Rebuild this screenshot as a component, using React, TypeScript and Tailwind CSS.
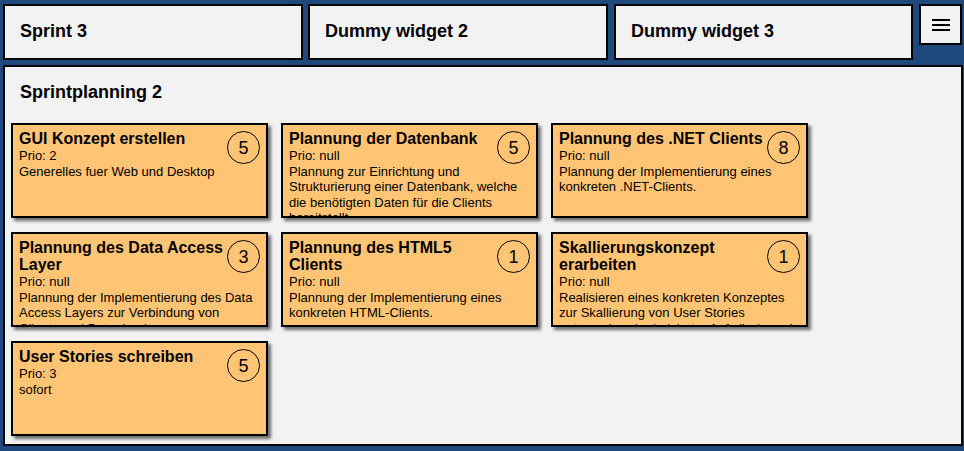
const stories = [
  { title: "GUI Konzept erstellen", prio: "2", points: 5, text: "Generelles fuer Web und Desktop" },
  { title: "Plannung der Datenbank", prio: "null", points: 5, text: "Plannung zur Einrichtung und Strukturierung einer Datenbank, welche die benötigten Daten für die Clients bereitstellt." },
  { title: "Plannung des .NET Clients", prio: "null", points: 8, text: "Plannung der Implementierung eines konkreten .NET-Clients." },
  { title: "Plannung des Data Access Layer", prio: "null", points: 3, text: "Plannung der Implementierung des Data Access Layers zur Verbindung von Clients und Datenbank." },
  { title: "Plannung des HTML5 Clients", prio: "null", points: 1, text: "Plannung der Implementierung eines konkreten HTML-Clients." },
  { title: "Skallierungskonzept erarbeiten", prio: "null", points: 1, text: "Realisieren eines konkreten Konzeptes zur Skallierung von User Stories entsprechend priorisierter Aufwände und Laufzeiten." },
  { title: "User Stories schreiben", prio: "3", points: 5, text: "sofort" },
]

const Widget = ({ title, className = "w-[300px]" }: { title: string; className?: string }) => (
  <div className={`${className} h-[56px] bg-[#f2f2f2] border-2 border-black pl-[15px] pt-[15px] text-[18px] font-bold leading-[21px]`}>
    {title}
  </div>
)

const StoryCard = ({ title, prio, points, text }: { title: string; prio: string; points: number; text: string }) => (
  <div className="w-[257px] h-[95px] bg-[#ffc574] border-2 border-black px-[6px] pt-[5px] overflow-hidden shadow-[3px_3px_3px_rgba(0,0,0,0.55)]">
    <div className="float-right mt-[1px] -mb-[8px] w-[33px] h-[33px] rounded-full border border-black flex items-center justify-center text-[18px] leading-none">
      {points}
    </div>
    <div className="text-[16px] font-bold leading-[17px]">{title}</div>
    <div className="text-[13px] leading-[15.5px] mt-[1px]">Prio: {prio}</div>
    <div className="text-[13px] leading-[15.5px]">{text}</div>
  </div>
)

export default function App() {
  return (
    <div
      className="h-screen w-screen bg-[#1f497d] flex flex-col pl-[3px] pr-[1px] pt-[4px] pb-[5px] gap-[5px] overflow-hidden"
      style={{ fontFamily: '"Liberation Sans", Arial, sans-serif' }}
    >
      <div className="flex gap-[5px] items-start">
        <Widget title="Sprint 3" />
        <Widget title="Dummy widget 2" />
        <Widget title="Dummy widget 3" className="w-[299px] ml-[1px]" />
        <button className="ml-[1px] w-[43px] h-[41px] bg-[#f2f2f2] border-2 border-black flex flex-col items-center justify-center gap-[3px]">
          <span className="block w-[18px] h-[2px] bg-black" />
          <span className="block w-[18px] h-[2px] bg-black" />
          <span className="block w-[18px] h-[2px] bg-black" />
        </button>
      </div>

      <div className="flex-1 bg-[#f2f2f2] border-2 border-black px-[6px] pt-[15px]">
        <h2 className="text-[18px] font-bold leading-[21px] pl-[9px]">Sprintplanning 2</h2>
        <div className="flex flex-wrap gap-x-[13px] gap-y-[14px] mt-[20px]">
          {stories.map((s) => (
            <StoryCard key={s.title} {...s} />
          ))}
        </div>
      </div>
    </div>
  )
}
